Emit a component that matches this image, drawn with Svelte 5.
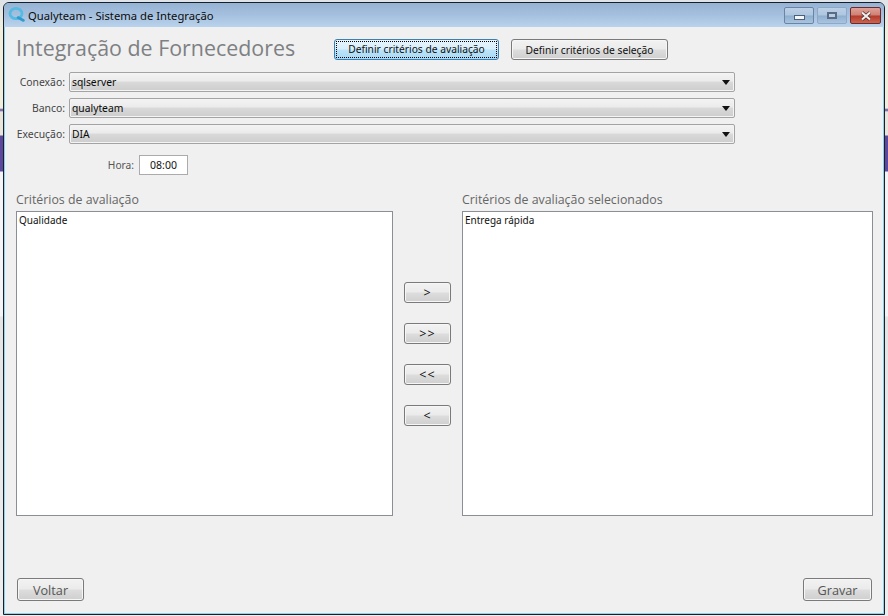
<script>
  const rows = [
    { label: 'Conexão:', value: 'sqlserver' },
    { label: 'Banco:', value: 'qualyteam' },
    { label: 'Execução:', value: 'DIA' }
  ];
  const moves = ['>', '>>', '<<', '<'];
</script>

<div class="desktop">
  <div class="window">
    <header class="titlebar">
      <svg class="logo" width="20" height="20" viewBox="0 0 20 20">
        <ellipse cx="9" cy="8.5" rx="6" ry="5.2" fill="none" stroke="#55bbe2" stroke-width="2.8" />
        <path d="M11 12.5 L16.5 15.5" stroke="#2f9bd0" stroke-width="2.6" stroke-linecap="round" />
      </svg>
      <span class="title">Qualyteam - Sistema de Integração</span>
      <div class="controls">
        <div class="ctl"><span class="min"></span></div>
        <div class="ctl max"><span class="square"></span></div>
        <div class="ctl close">
          <svg width="12" height="10" viewBox="0 0 12 10"><path d="M2 1.5 L10 8.5 M10 1.5 L2 8.5" stroke="#4a2a2a" stroke-width="3.6" /><path d="M2 1.5 L10 8.5 M10 1.5 L2 8.5" stroke="#f2eeee" stroke-width="2.2" /></svg>
        </div>
      </div>
    </header>

    <main class="content">
      <div class="top">
        <h1>Integração de Fornecedores</h1>
        <button class="btn focus"><span>Definir critérios de avaliação</span></button>
        <button class="btn second">Definir critérios de seleção</button>
      </div>

      <div class="rows">
        {#each rows as r}
          <div class="row">
            <span class="lbl">{r.label}</span>
            <div class="select">
              <span>{r.value}</span>
              <i class="arrow"></i>
            </div>
          </div>
        {/each}
      </div>

      <div class="hora">
        <span class="lbl2">Hora:</span>
        <div class="time">08:00</div>
      </div>

      <div class="lists">
        <section class="col left">
          <h2>Critérios de avaliação</h2>
          <div class="box">Qualidade</div>
        </section>
        <div class="moves">
          {#each moves as m}
            <button class="btn move">{m}</button>
          {/each}
        </div>
        <section class="col right">
          <h2>Critérios de avaliação selecionados</h2>
          <div class="box">Entrega rápida</div>
        </section>
      </div>

      <footer class="foot">
        <button class="btn big voltar">Voltar</button>
        <button class="btn big gravar">Gravar</button>
      </footer>
    </main>
  </div>
</div>

<style>
  :global(body) {
    margin: 0;
    overflow: hidden;
    background: linear-gradient(180deg, #dfe3e8 0, #f1eedc 30px, #f1eedc 108px, #5b49a0 110px, #e8e6da 112px, #e8e6da 135px, #5b49a0 136px, #5b49a0 171px, #f4f3f6 172px, #f4f3f6 316px, #e4e4e4 317px, #eeeeee 616px);
  }
  .desktop {
    width: 888px;
    height: 616px;
    box-sizing: border-box;
    padding: 2px 3px 1px 3px;
    font-family: "Noto Sans", "Liberation Sans", sans-serif;
  }
  .window {
    height: 100%;
    box-sizing: border-box;
    display: flex;
    flex-direction: column;
    border: 1px solid #14202c;
    border-radius: 6px 6px 0 0;
    background: #a9c4e2;
    box-shadow: inset 0 0 0 1px #8fd0ea;
    overflow: hidden;
  }
  .titlebar {
    height: 24px;
    flex: none;
    display: flex;
    align-items: center;
    padding-left: 3px;
    background: linear-gradient(180deg, #97b3d4 0%, #a5c0de 50%, #b9d3ed 100%);
    color: #0c0c0c;
  }
  .logo { flex: none; }
  .title {
    margin-left: 1px;
    font-family: "Noto Sans", sans-serif;
    font-size: 11.25px;
  }
  .controls {
    margin-left: auto;
    margin-right: 3px;
    align-self: flex-start;
    margin-top: 4px;
    display: flex;
    gap: 3px;
  }
  .ctl {
    width: 28px;
    height: 15px;
    border: 1px solid #6a84a4;
    border-radius: 2px;
    display: flex;
    align-items: center;
    justify-content: center;
    background: linear-gradient(180deg, #bcd0e6 0%, #aec6e0 48%, #8faecf 52%, #a9c4e0 100%);
  }
  .ctl.max { border-color: #8ea8c6; }
  .min {
    width: 9px;
    height: 3px;
    margin-top: 3px;
    background: #f4f6f8;
    border: 1px solid #4c5f78;
  }
  .square {
    width: 6px;
    height: 3px;
    border: 2px solid #5a6c84;
    background: #b9cde3;
    box-sizing: content-box;
  }
  .ctl.close {
    width: 29px;
    border-color: #6d2a2a;
    background: linear-gradient(180deg, #dfa198 0%, #cf8074 48%, #b5392a 52%, #c9654f 100%);
  }
  .content {
    flex: 1;
    min-height: 0;
    margin: 0 1px 1px;
    padding: 8px 0 0 11px;
    background: #f0f0f0;
    display: flex;
    flex-direction: column;
  }
  .top {
    display: flex;
    align-items: flex-start;
    height: 31px;
    flex: none;
  }
  h1 {
    margin: 0;
    width: 318px;
    font-family: "Open Sans", sans-serif;
    font-weight: 400;
    font-size: 21.4px;
    line-height: 25px;
    color: #7e8083;
    white-space: nowrap;
  }
  .btn {
    box-sizing: border-box;
    padding: 0;
    border: 1px solid #7a7a7a;
    border-radius: 3px;
    color: #111;
    font-family: "Noto Sans", "Liberation Sans", sans-serif;
    font-size: 10.25px;
    background: linear-gradient(180deg, #f2f2f2 0%, #ebebeb 48%, #dddddd 52%, #cfcfcf 100%);
    box-shadow: inset 0 0 0 1px #f6f6f6;
  }
  .top .btn { height: 21px; margin-top: 4px; flex: none; }
  .focus {
    width: 165px;
    border-color: #3c7fb1;
    background: linear-gradient(180deg, #e6f4fc 0%, #d9effb 48%, #bde4f9 52%, #a7d9f5 100%);
    box-shadow: none;
    padding: 1px;
  }
  .focus span {
    display: block;
    height: 100%;
    box-sizing: border-box;
    line-height: 15px;
    border: 1px dotted #000;
  }
  .second { width: 157px; margin-left: 12px; }
  .rows {
    display: flex;
    flex-direction: column;
    gap: 6px;
    margin-top: 6px;
    flex: none;
  }
  .row { display: flex; align-items: center; height: 20px; }
  .lbl {
    width: 53px;
    margin-left: -4px;
    margin-right: 4px;
    text-align: right;
    font-size: 10.4px;
    color: #444;
  }
  .select {
    width: 666px;
    height: 20px;
    box-sizing: border-box;
    border: 1px solid #a3a3a3;
    border-radius: 2px;
    display: flex;
    align-items: center;
    justify-content: space-between;
    padding: 0 3px 0 2px;
    font-size: 10.3px;
    color: #0a0a0a;
    background: linear-gradient(180deg, #f3f3f3 0%, #ebebeb 45%, #d9d9d9 50%, #cdcdcd 100%);
    box-shadow: inset 0 0 0 1px #f4f4f4;
  }
  .arrow {
    width: 0;
    height: 0;
    margin: 1px 1px 0 0;
    border-left: 4px solid transparent;
    border-right: 4px solid transparent;
    border-top: 5px solid #111;
  }
  .hora {
    display: flex;
    align-items: center;
    height: 20px;
    margin-top: 11px;
    flex: none;
  }
  .lbl2 {
    width: 118px;
    text-align: right;
    font-size: 10.2px;
    color: #555;
  }
  .time {
    margin-left: 5px;
    width: 49px;
    height: 20px;
    box-sizing: border-box;
    border: 1px solid #ababab;
    background: #fff;
    font-size: 10.5px;
    line-height: 18px;
    text-align: center;
    color: #111;
  }
  .lists {
    display: flex;
    margin-top: 16px;
    height: 325px;
    flex: none;
  }
  .col { display: flex; flex-direction: column; }
  .col.left { width: 377px; }
  .col.right { width: 411px; }
  h2 {
    margin: 0;
    height: 20px;
    font-family: "Open Sans", sans-serif;
    font-weight: 400;
    font-size: 12.35px;
    line-height: 17px;
    color: #666;
    white-space: nowrap;
  }
  .box {
    flex: 1;
    box-sizing: border-box;
    border: 1px solid #8a8f96;
    background: #fff;
    padding: 1px 2px;
    font-size: 10px;
    line-height: 15px;
    color: #111;
  }
  .moves {
    width: 69px;
    display: flex;
    flex-direction: column;
    align-items: center;
    gap: 20px;
    padding-top: 91px;
    box-sizing: border-box;
  }
  .move {
    width: 47px;
    height: 21px;
    font-family: "Open Sans", sans-serif;
    font-size: 12.5px;
    letter-spacing: 1px;
  }
  .foot {
    display: flex;
    justify-content: space-between;
    margin-top: 62px;
    padding: 0 11px 0 1px;
  }
  .big {
    height: 23px;
    font-size: 12.7px;
    font-family: "Open Sans", sans-serif;
    color: #555;
  }
  .voltar { width: 67px; }
  .gravar { width: 69px; }
</style>
